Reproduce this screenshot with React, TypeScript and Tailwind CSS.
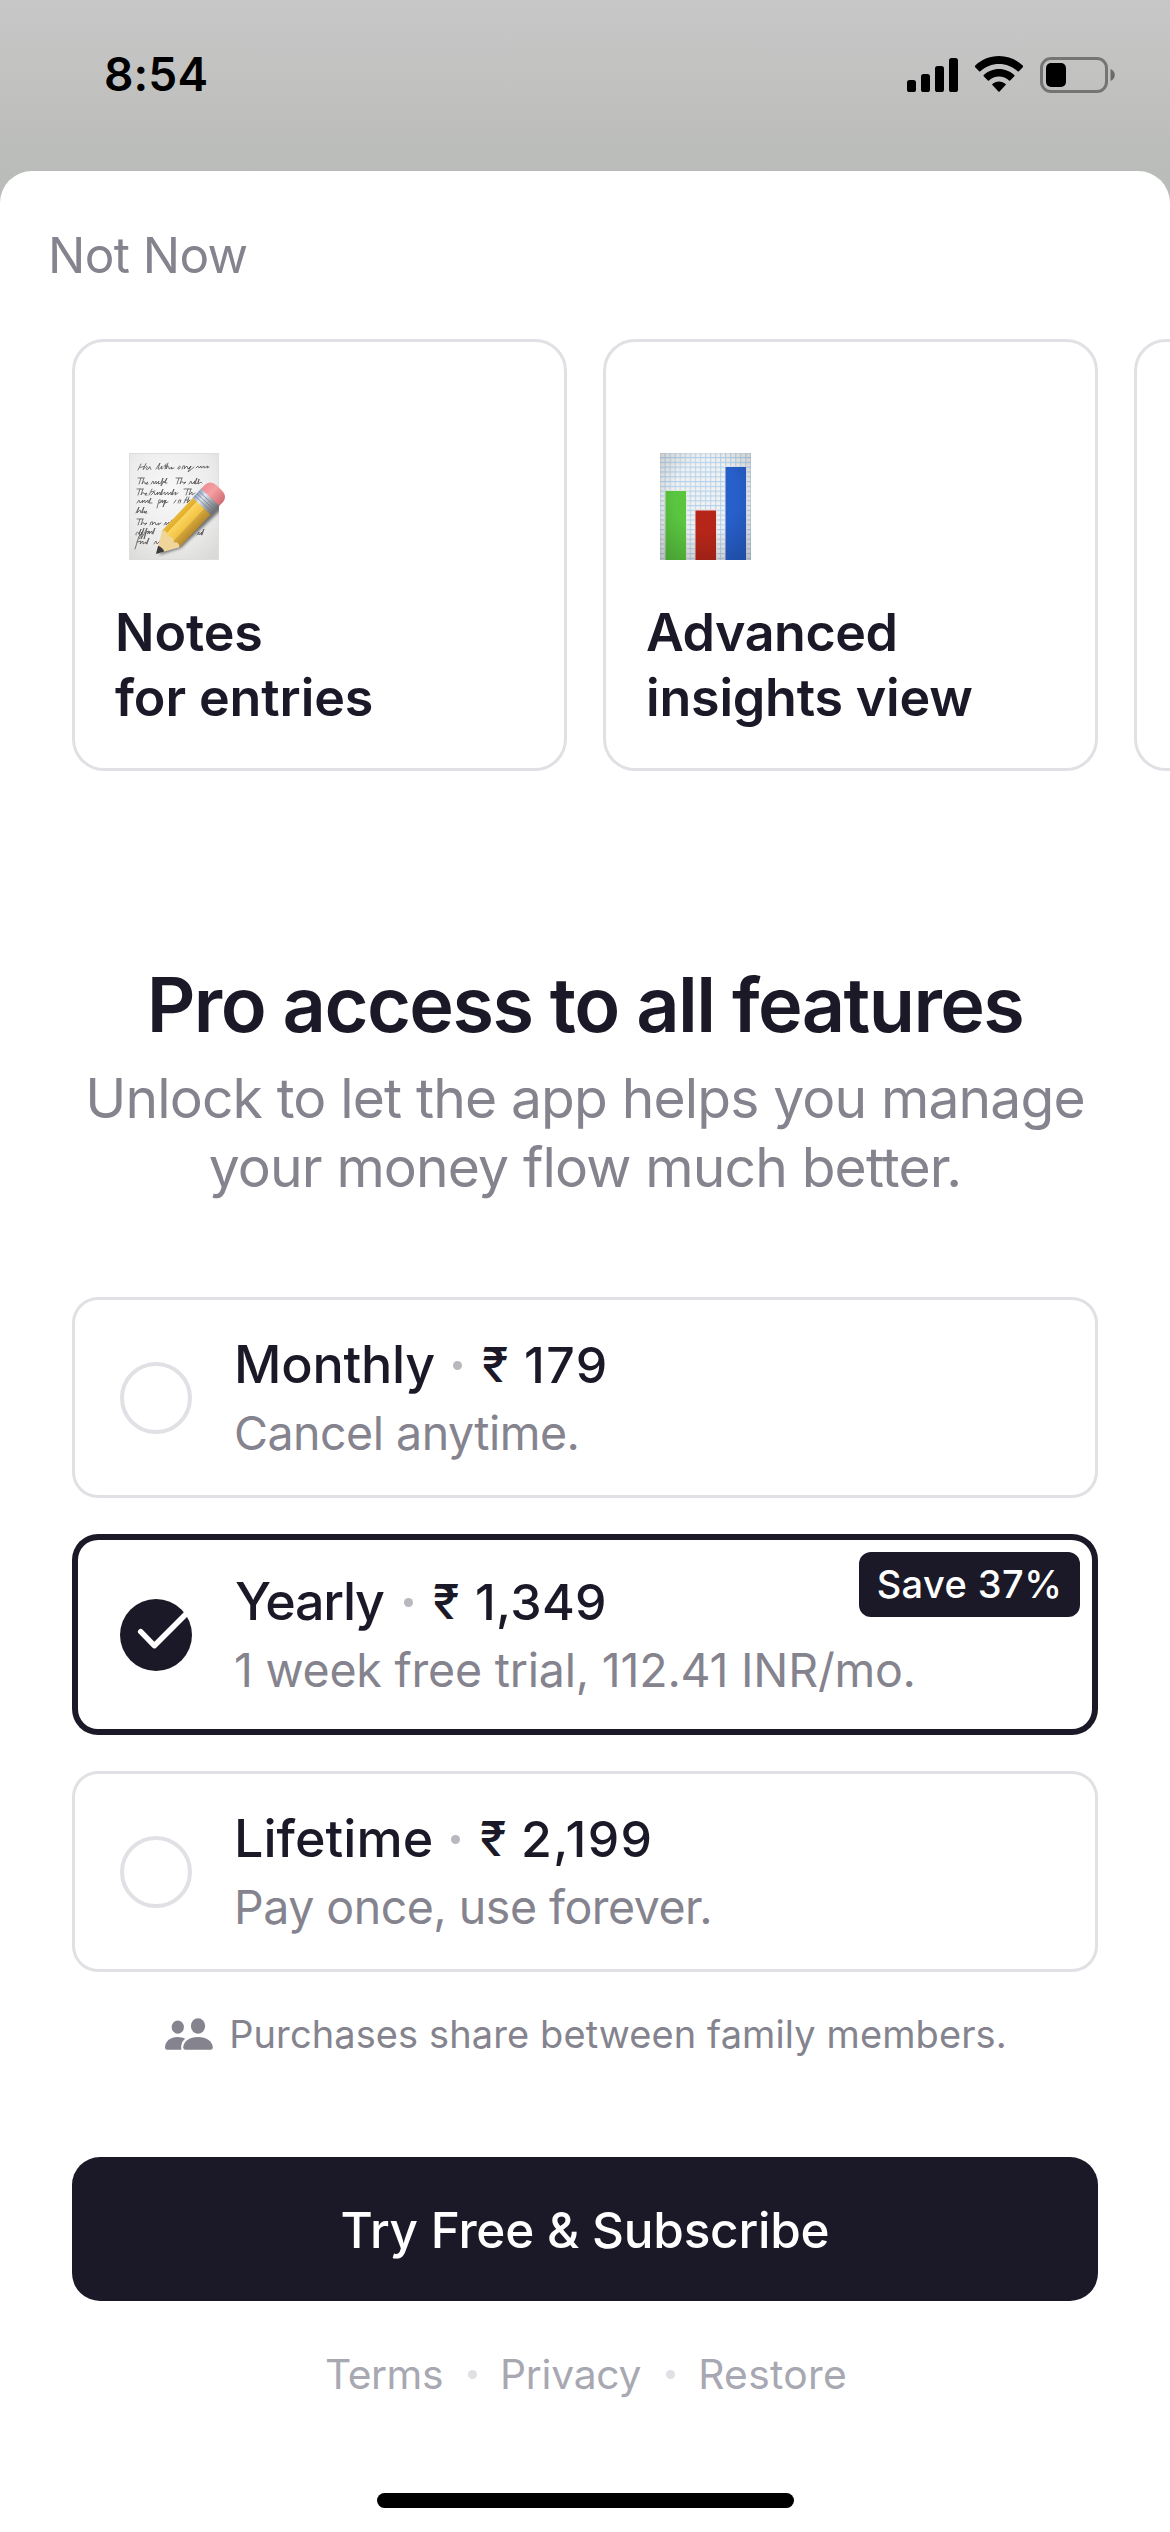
import type { ReactNode } from "react";

function SignalIcon() {
  return (
    <svg className="h-9 w-[51px]" viewBox="0 0 51 36" fill="black">
      <rect x="0" y="24" width="9" height="12" rx="2.6" />
      <rect x="14" y="18" width="9" height="18" rx="2.6" />
      <rect x="28" y="10" width="9" height="26" rx="2.6" />
      <rect x="42" y="2" width="9" height="34" rx="2.6" />
    </svg>
  );
}

function WifiIcon() {
  return (
    <svg className="h-9 w-12" viewBox="0 0 48 36" fill="black">
      <path d="M24 0C33.300 0 41.800 3.700 48 9.700Q48.500 10.400 48 11.100L43.900 15.300Q43.300 15.800 42.700 15.300C37.700 10.600 31.100 8 24 8C16.900 8 10.300 10.600 5.300 15.300Q4.700 15.800 4.100 15.300L0 11.100Q-.5 10.400 0 9.700C6.200 3.700 14.700 0 24 0Z" />
      <path d="M24 12.900C29.900 12.900 35.300 15.200 39.300 19Q39.900 19.700 39.300 20.300L35.200 24.500Q34.600 25 34 24.500C31.300 22.100 27.800 20.600 24 20.600C20.200 20.600 16.700 22.100 14 24.500Q13.400 25 12.800 24.500L8.700 20.300Q8.100 19.700 8.700 19C12.700 15.200 18.100 12.900 24 12.900Z" />
      <path d="M24 25.500C26.500 25.500 28.800 26.400 30.600 27.900Q31.200 28.500 30.600 29.100L24.600 35.500Q24 36 23.400 35.500L17.400 29.100Q16.800 28.500 17.400 27.900C19.200 26.400 21.500 25.500 24 25.500Z" />
    </svg>
  );
}

function BatteryIcon() {
  return (
    <svg className="h-9 w-[75px]" viewBox="0 0 75 36">
      <rect x="1.500" y="1.500" width="65" height="33" rx="9.500" fill="none" stroke="black" strokeOpacity=".4" strokeWidth="3" />
      <rect x="6" y="6" width="20" height="24" rx="5" fill="black" />
      <path d="M70.500 12C73 13 74.800 15.200 74.800 18C74.800 20.800 73 23 70.500 24Z" fill="black" fillOpacity=".45" />
    </svg>
  );
}

const SCRIPT_LINES = [
  "M9 17l3-6m-1 3.500l4-1m2-3l-3 6c2-1 3-4 4-3s-2 3 0 3 2-3 3-3-1 3 1 3M27 16l4-6-2 6c2 1 3-2 4-3l-1 3 2-1M37 11l-1 5m-1-3h4m0-3l-2 6c1-3 3-3 3-1l0 1 3-2-1 2 3-1M49 15c1-3 3-2 2 0s-3 1-2 0m4 1l1-3 2 0-1 3 3-3 1 3 3-3-2 3 2-3-3 6 6-5M67 15l2-2 1 2 2-2 0 2 3-2 0 2 4-2-1 2 2-1",
  "M9 25h6m-3 0l-2 6m5-6l-2 6c1-3 3-3 3-1l0 1 3-2-2 2 2 0M22 31l2-3 1 3 2-3 0 3 3-3-1 3 3-1 2-5-2 8 3-5 0 2 3-5-2 5h2M47 25h6m-3 0l-2 6m5-6l-2 6c1-3 3-3 3-1l3-1-2 2M60 31l2-3 1 3 3-3-1 3 3-6-2 6 3-1 1-4-1 5 3-2 1 1",
  "M8 36h6m-3 0l-2 6m5-6l-2 6c1-3 3-3 3-1l3-1-2 2 2 0M20 42l3-6m-1 3l4-1m-4 4l3-3 1 3 3-3-1 3 3-3 0 3 3-6-2 6 4-3 0 3 3-3 0 3 3-3 0 3 3-6-2 6 4-3-1 3 3-2M55 36h7m-3 0l-2 6m5-6l-2 6 3-3 0 3 3-2",
  "M8 50l2-3 1 3 3-3-1 3 3-3 0 3 3-3 0 3 3-5-2 5h3M28 55l2-8c3-1 3 3 0 3l4-3-1 3 3-3-2 7 3-7-1 3 3-1M45 50l2-3m2 3l1-3 2 0-1 3M55 50l3-6m-2 3h4m0-3l-2 6 3-3",
  "M7 60l3-6-2 6 3-3 1 3 3-6-2 6 3-2-1 2 3-2-2 2h2",
  "M8 66h6m-3 0l-2 6m5-6l-2 6c1-3 3-3 3-1l3-1-2 2M21 72l1-3 2 0-1 3 3-3 1 3 3-2-1 2 3-2M35 72l2-3 0 3 3-3 0 3 3-5",
  "M7 82c-1-3 3-4 3-1l2-5-2 6h2l1-3-1 3 3-7-3 11 3-5 3-6-3 11 2-7 3-1-2 3 3-3-1 3 3-3 0 3 3-6-2 6M68 82l2-3 0 3 3-3-1 3 3-6-2 6",
  "M6 96l4-13c2-2 2 0 0 3m-2 3l4-1-1 3 3-3 0 3 3-2 0 2 3-6-2 6M25 91l2-3 1 3 3-3 3-5-4 12",
];

/** Handwritten sheet with a pencil lying across it. */
function NotesPicture() {
  return (
    <svg className="h-[107px] w-[100px]" viewBox="0 0 100 107">
      <defs>
        <radialGradient id="sheet" cx="45%" cy="35%" r="80%">
          <stop offset="0" stopColor="#f8f8f8" />
          <stop offset=".6" stopColor="#ececec" />
          <stop offset="1" stopColor="#d9d9d7" />
        </radialGradient>
        <linearGradient id="wood" x1="0" x2="1">
          <stop offset="0" stopColor="#e9b93a" />
          <stop offset=".2" stopColor="#e3ae2d" />
          <stop offset=".23" stopColor="#fbd45f" />
          <stop offset=".62" stopColor="#f2c344" />
          <stop offset=".66" stopColor="#d3a63c" />
          <stop offset="1" stopColor="#b8892b" />
        </linearGradient>
        <linearGradient id="ferrule" x1="0" x2="1">
          <stop offset="0" stopColor="#8fa2bd" />
          <stop offset=".3" stopColor="#dfe6f0" />
          <stop offset=".6" stopColor="#a4a9b0" />
          <stop offset="1" stopColor="#6f6f70" />
        </linearGradient>
        <linearGradient id="eraser" x1="0" x2="1">
          <stop offset="0" stopColor="#ee8d92" />
          <stop offset=".4" stopColor="#f5a0a3" />
          <stop offset="1" stopColor="#cf6c73" />
        </linearGradient>
        <filter id="soft" x="-30%" y="-30%" width="160%" height="160%">
          <feGaussianBlur stdDeviation="1.800" />
        </filter>
        <clipPath id="sheetEdge">
          <rect width="90" height="107" />
        </clipPath>
      </defs>
      <rect width="90" height="107" fill="url(#sheet)" />
      <rect x=".5" y=".5" width="89" height="106" fill="none" stroke="#dededd" />
      <g fill="none" stroke="#505050" strokeWidth=".75" strokeLinejoin="round" strokeLinecap="round">
        {SCRIPT_LINES.map((d) => (
          <path key={d} d={d} />
        ))}
      </g>
      <g clipPath="url(#sheetEdge)">
        <path d="M30 102L52 95L94 55L84 42L40 82Z" fill="#333" opacity=".65" filter="url(#soft)" />
      </g>
      <g transform="translate(27 101) rotate(43.5)">
        <path d="M0 0L-11.500 -21L-11.500 -22Q-7 -27 -4 -22Q1 -27 5 -22Q9 -26 12.500 -21Z" fill="#f0d59b" />
        <path d="M0 0L-4.200 -7.500Q0 -9.500 4.300 -7.500Z" fill="#3b3b3d" />
        <path d="M-11.800 -21V-67H12.500V-21Q8 -25 5 -20.500Q1 -25.500 -4 -20.500Q-8 -25.500 -11.800 -21Z" fill="url(#wood)" />
        <path d="M-12.200 -66H12.800V-79H-12.200Z" fill="url(#ferrule)" />
        <path d="M-12.200 -69H12.800M-12.200 -72H12.800M-12.200 -75H12.800" stroke="#6e7b8d" strokeWidth=".7" />
        <path d="M-12.200 -78.500V-84Q-11 -91.500 -3 -91.500H4Q12 -91.500 12.800 -84V-78.500Z" fill="url(#eraser)" />
      </g>
    </svg>
  );
}

/** Three bars on graph paper. */
function ChartPicture() {
  return (
    <svg className="h-[107px] w-[91px]" viewBox="0 0 91 107">
      <defs>
        <pattern id="grid" x="4.500" y="4" width="5.050" height="4.800" patternUnits="userSpaceOnUse">
          <path d="M0 .6H5.050M.6 0V4.800" stroke="#b4d3ee" strokeWidth="1" fill="none" />
        </pattern>
        <radialGradient id="vignette" cx="50%" cy="40%" r="75%">
          <stop offset=".45" stopColor="#000" stopOpacity="0" />
          <stop offset="1" stopColor="#000" stopOpacity=".2" />
        </radialGradient>
      </defs>
      <rect width="91" height="107" fill="#f3f2f0" />
      <rect width="91" height="107" fill="url(#grid)" />
      <rect x="4.500" y="37" width="22.500" height="70" fill="#dfe8df" />
      <rect x="34.500" y="56.500" width="22.500" height="50.500" fill="#e8dfdf" />
      <rect x="64.500" y="13" width="22.500" height="94" fill="#dde3ef" />
      <rect x="5.500" y="38" width="20.500" height="69" fill="#5ac640" />
      <rect x="35.500" y="57.500" width="20.500" height="49.500" fill="#b52619" />
      <rect x="65.500" y="14" width="20.500" height="93" fill="#275fcb" />
      <rect width="91" height="107" fill="url(#vignette)" />
    </svg>
  );
}

function CheckedMark() {
  return (
    <svg className="mt-px size-[72px] shrink-0" viewBox="0 0 72 72">
      <circle cx="36" cy="36" r="36" fill="#1b1927" />
      <path d="M20.700 32.700L34.300 46.700L71 10" fill="none" stroke="white" strokeWidth="5.500" strokeLinecap="round" strokeLinejoin="round" />
    </svg>
  );
}

function PeopleIcon() {
  return (
    <svg className="h-8 w-12" viewBox="0 0 48 32" fill="#84838e">
      <ellipse cx="12.800" cy="9.200" rx="6.100" ry="6.600" />
      <path d="M0 29.500C0 23 5.500 18.900 12.500 18.900C15.700 18.900 18.200 19.600 20.200 20.800C17.200 23 15.800 26.400 16.400 31.800H2.200Q0 31.800 0 29.500Z" />
      <ellipse cx="33" cy="8" rx="7.100" ry="7.800" />
      <path d="M18.200 29.500C18.200 23.500 24.500 18.900 33 18.900C41.500 18.900 47.800 23.500 47.800 29.500Q47.800 31.800 45.500 31.800H20.500Q18.200 31.800 18.200 29.500Z" />
    </svg>
  );
}

function FeatureCard({ children }: { children?: ReactNode }) {
  return (
    <div className="flex h-[432px] w-[495px] shrink-0 flex-col justify-end rounded-[32px] border-3 border-[#e0e0e5] px-10 pb-[38px]">
      {children}
    </div>
  );
}

function Dot({ className }: { className: string }) {
  return <span className={`size-[9px] shrink-0 rounded-full ${className}`} />;
}

type Plan = {
  name: string;
  amount: string;
  note: string;
  nameStyle: string;
  amountStyle: string;
  noteStyle: string;
  badge?: string;
  selected?: boolean;
};

const PLANS: Plan[] = [
  { name: "Monthly", amount: "179", note: "Cancel anytime.", nameStyle: "w-[200px] tracking-[-0.22px]", amountStyle: "tracking-[1.4px]", noteStyle: "tracking-[-0.5px]" },
  { name: "Yearly", amount: "1,349", note: "1 week free trial, 112.41 INR/mo.", nameStyle: "ml-px w-[150px] tracking-[-1.3px]", amountStyle: "tracking-[0.3px]", noteStyle: "tracking-[-0.21px]", badge: "Save 37%", selected: true },
  { name: "Lifetime", amount: "2,199", note: "Pay once, use forever.", nameStyle: "w-[198px] tracking-[0.05px]", amountStyle: "-ml-px tracking-[1.45px]", noteStyle: "tracking-[-0.5px]" },
];

function PlanRow({ plan }: { plan: Plan }) {
  return (
    <div
      className={`relative flex h-[201px] items-center rounded-[26px] pl-12 ring-inset ${
        plan.selected ? "ring-[6px] ring-[#1b1927]" : "ring-[3px] ring-[#e0e0e5]"
      }`}
    >
      {plan.selected ? <CheckedMark /> : <span className="mt-px size-[72px] shrink-0 rounded-full border-4 border-[#e0e0e5]" />}
      <div className="ml-[42px] flex flex-col gap-2 pt-[3px]">
        <div className="flex h-[60px] items-center text-[52px] leading-[60px] font-medium whitespace-nowrap text-[#1b1927]">
          <span className={plan.nameStyle}>{plan.name}</span>
          <Dot className="ml-[19px] bg-[#b8b8be]" />
          <span className="ml-5 w-[42px] text-[48px]">₹</span>
          <span className={`text-[50px] ${plan.amountStyle}`}>{plan.amount}</span>
        </div>
        <div className={`text-[46.5px] leading-[60px] whitespace-nowrap text-[#84838e] ${plan.noteStyle}`}>{plan.note}</div>
      </div>
      {plan.badge && (
        <span className="absolute top-[18px] right-[18px] flex h-[65px] w-[221px] items-center justify-center rounded-xl bg-[#1b1927] text-[38px] font-medium tracking-[0.42px] text-white">
          {plan.badge}
        </span>
      )}
    </div>
  );
}

export default function App() {
  return (
    <div className="flex h-[2532px] w-[1170px] flex-col overflow-hidden bg-[linear-gradient(#c7c7c7,#bfc0be_110px,#babcb9_171px,#babcb9)] font-['Inter',sans-serif]">
      <header className="flex h-[171px] shrink-0 items-start justify-between pr-[55px] pl-[104px]">
        <div className="pt-[44px] text-[46px] leading-[60px] font-semibold tracking-[0.12px] text-black">8:54</div>
        <div className="flex items-center pt-[55px]">
          <SignalIcon />
          <div className="ml-[17px] flex">
            <WifiIcon />
          </div>
          <div className="ml-[17px] flex pt-[2px]">
            <BatteryIcon />
          </div>
        </div>
      </header>

      <main className="flex flex-1 flex-col rounded-t-[32px] bg-white">
        <div className="h-[168px] shrink-0 pt-[54px] pl-[48px] text-[49.5px] leading-[60px] tracking-[-0.6px] text-[#84838e]">Not Now</div>

        <section className="flex shrink-0 gap-9 overflow-hidden pl-[72px]">
          <FeatureCard>
            <div className="mb-[40px] ml-[14px]">
              <NotesPicture />
            </div>
            <p className="text-[52px] leading-[65px] font-semibold tracking-[-0.1px] text-[#1b1927]">
              Notes
              <br />
              for entries
            </p>
          </FeatureCard>
          <FeatureCard>
            <div className="mb-[40px] ml-[14px]">
              <ChartPicture />
            </div>
            <p className="text-[52px] leading-[65px] font-semibold text-[#1b1927]">
              <span className="tracking-[-0.45px]">Advanced</span>
              <br />
              <span className="tracking-[-0.2px]">insights view</span>
            </p>
          </FeatureCard>
          <FeatureCard />
        </section>

        <section className="mt-[189px] shrink-0 text-center">
          <h1 className="text-[75.6px] leading-[90px] font-semibold tracking-[-1.57px] text-[#1b1927]">Pro access to all features</h1>
          <p className="mt-[14px] text-[55.2px] leading-[69px] tracking-[-0.85px] text-[#84838e]">
            Unlock to let the app helps you manage
            <br />
            your money flow much better.
          </p>
        </section>

        <section className="mx-[72px] mt-[95px] flex shrink-0 flex-col gap-9">
          {PLANS.map((plan) => (
            <PlanRow key={plan.name} plan={plan} />
          ))}
        </section>

        <div className="mt-[38px] flex h-12 shrink-0 items-center justify-center gap-4 pl-[2px]">
          <PeopleIcon />
          <span className="text-[38px] leading-[48px] tracking-[0.1px] text-[#84838e]">Purchases share between family members.</span>
        </div>

        <button className="mx-[72px] mt-[99px] flex h-36 shrink-0 items-center justify-center rounded-[28px] bg-[#1b1927] pt-[2px] text-[49.5px] font-medium tracking-[-0.24px] text-white">
          Try Free &amp; Subscribe
        </button>

        <nav className="mt-[46px] flex h-[54px] shrink-0 items-center justify-center pl-0.5 text-[40.8px] leading-[54px] text-[#a8a8b2]">
          <span className="tracking-[-0.4px]">Terms</span>
          <Dot className="mr-[23px] ml-[25px] bg-[#e0e0e5]" />
          <span className="tracking-[-0.28px]">Privacy</span>
          <Dot className="mr-[23px] ml-[25px] bg-[#e0e0e5]" />
          <span className="tracking-[0.3px]">Restore</span>
        </nav>

        <div className="mx-auto mt-auto mb-6 h-[15px] w-[417px] shrink-0 rounded-full bg-black" />
      </main>
    </div>
  );
}
